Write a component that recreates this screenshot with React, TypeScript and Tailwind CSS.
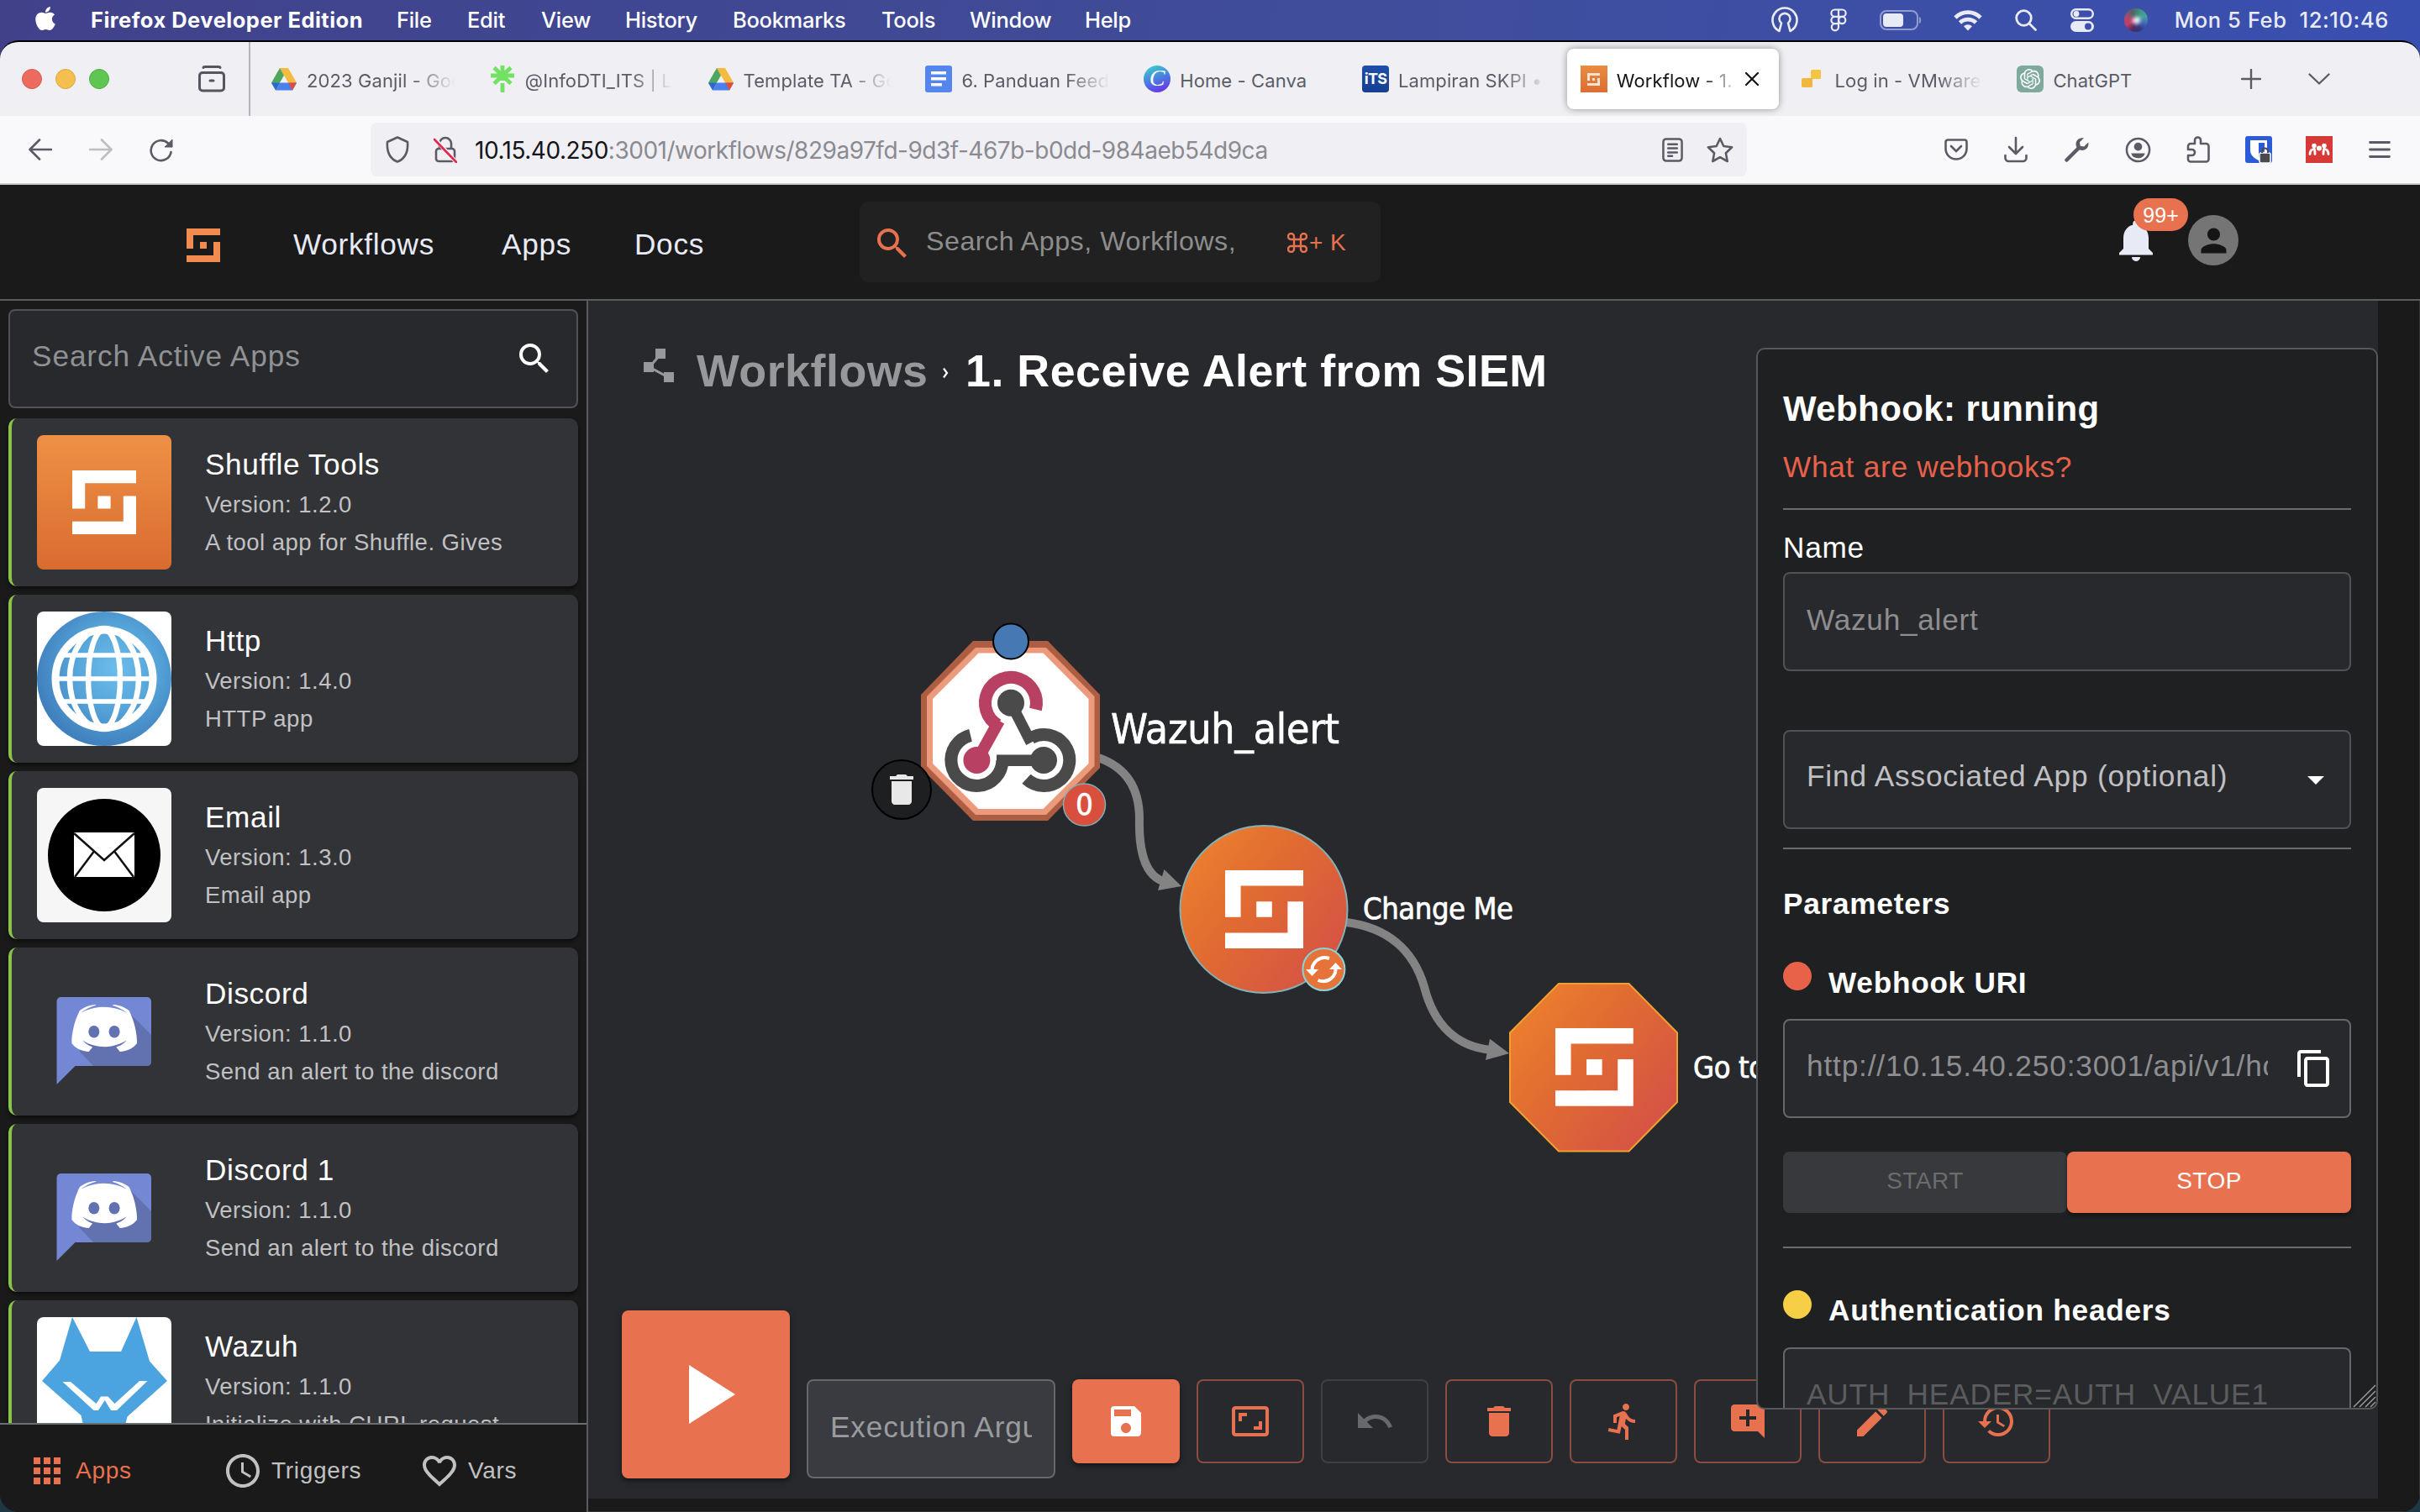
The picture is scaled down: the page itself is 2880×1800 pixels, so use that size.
import React from "react";
import { FaApple } from "react-icons/fa";
import { SiOpenai } from "react-icons/si";
import {
  MdSearch,
  MdNotifications,
  MdPerson,
  MdApps,
  MdAccessTime,
  MdFavoriteBorder,
  MdPlayArrow,
  MdSave,
  MdAspectRatio,
  MdUndo,
  MdDelete,
  MdDirectionsRun,
  MdAddComment,
  MdEdit,
  MdRestore,
  MdContentCopy,
  MdArrowDropDown,
} from "react-icons/md";

const SHUFFLE_PATH = "M0 0H5V1H1V3H0zM2 2H3V3H2zM4 2H5V5H0V4H4z";

function ShuffleMark({ className }: { className?: string }) {
  return (
    <svg viewBox="0 0 5 5" className={className} fill="currentColor">
      <path d={SHUFFLE_PATH} />
    </svg>
  );
}

/* ---------- macOS menu bar ---------- */

const menus = [
  { label: "File", cls: "w-[84px]" },
  { label: "Edit", cls: "w-[88px]" },
  { label: "View", cls: "w-[100px]" },
  { label: "History", cls: "w-[128px]" },
  { label: "Bookmarks", cls: "w-[177px]" },
  { label: "Tools", cls: "w-[105px]" },
  { label: "Window", cls: "w-[137px]" },
  { label: "Help", cls: "w-[60px]" },
];

function MenuBar() {
  return (
    <div className="flex h-12 shrink-0 items-center pl-[40px] pr-[37px] text-[25.5px] leading-[46px] text-white">
      <FaApple className="-mt-[5px] h-[32px] w-[28px]" />
      <div className="ml-[40px] w-[364px] shrink-0 whitespace-nowrap font-bold tracking-[0.48px]">Firefox Developer Edition</div>
      {menus.map((m) => (
        <div key={m.label} className={`shrink-0 whitespace-nowrap font-medium tracking-[-0.3px] ${m.cls}`}>
          {m.label}
        </div>
      ))}
      <div className="ml-auto flex items-center text-[#e8eaf6]">
        <svg viewBox="0 0 34 32" className="h-[32px] w-[34px]" fill="none" stroke="currentColor" strokeWidth="2.6">
          <path d="M10.5 29A14.5 14.5 0 1 1 23.500 29L21 19.500A6.500 6.500 0 1 0 13 19.500Z" strokeLinejoin="round" />
        </svg>
        <svg viewBox="0 0 20 28" className="ml-[37px] h-[28px] w-[20px]" fill="none" stroke="currentColor" strokeWidth="2.2">
          <path d="M10 1.500H5.500a4.100 4.100 0 0 0 0 8.300H10zM10 1.500h4.500a4.100 4.100 0 0 1 0 8.300H10zM10 9.800H5.500a4.100 4.100 0 0 0 0 8.300H10zM10 18.100H5.500A4.100 4.100 0 1 0 10 22.500z" />
          <circle cx="14.200" cy="14" r="4.100" />
        </svg>
        <svg viewBox="0 0 50 24" className="ml-[39px] h-[24px] w-[50px]">
          <rect x="1" y="1" width="44" height="22" rx="7" fill="none" stroke="currentColor" strokeOpacity=".5" strokeWidth="2" />
          <rect x="4" y="4" width="24" height="16" rx="4" fill="currentColor" />
          <path d="M47 8c3 1 3 7 0 8z" fill="currentColor" fillOpacity=".5" />
        </svg>
        <svg viewBox="0 0 34 26" className="ml-[38px] h-[26px] w-[34px]" fill="none" stroke="currentColor" strokeWidth="4.800">
          <path d="M2 10A21 21 0 0 1 32 10" />
          <path d="M7.500 16A13.500 13.500 0 0 1 26.500 16" />
          <path d="M17 25.500l-5-5.300a7.500 7.500 0 0 1 10 0z" fill="currentColor" stroke="none" />
        </svg>
        <svg viewBox="0 0 26 26" className="ml-[39px] h-[26px] w-[26px]" fill="none" stroke="currentColor" strokeWidth="2.800" strokeLinecap="round">
          <circle cx="10.500" cy="10.500" r="8.800" />
          <path d="M17 17l7.500 7.500" />
        </svg>
        <svg viewBox="0 0 28 28" className="ml-[40px] h-[28px] w-[28px]">
          <rect x="1.200" y="1.200" width="25.600" height="10.600" rx="5.300" fill="none" stroke="currentColor" strokeWidth="2.400" />
          <circle cx="7" cy="6.500" r="3.400" fill="currentColor" />
          <rect x="0" y="15" width="28" height="13" rx="6.500" fill="currentColor" />
          <circle cx="21" cy="21.500" r="4" fill="#3b50ae" />
        </svg>
        <div className="ml-[36px] flex h-[28px] w-[28px] items-center justify-center rounded-full bg-[conic-gradient(from_20deg,#3f8f7c,#4aa39b,#3f68b8,#34357e,#4b2a66,#c63d62,#a5496d,#56606b,#3f8f7c)]">
          <div className="h-[9px] w-[9px] rounded-full bg-white/90 blur-[2px]" />
        </div>
        <div className="ml-[31px] w-[256px] whitespace-pre text-right font-medium tracking-[0.62px]">Mon 5 Feb  12:10:46</div>
      </div>
    </div>
  );
}

/* ---------- Browser chrome ---------- */

function DriveIcon() {
  return (
    <svg viewBox="0 0 30 27" className="h-[27px] w-[30px]">
      <path d="M10 0h10l-5 8.700z" fill="#1e8e3e" />
      <path d="M10 0L0 17.500l5 8.500L15 8.700z" fill="#4ca65c" />
      <path d="M20 0H10l10 17.500h10z" fill="#f5bb41" />
      <path d="M10.200 17.500H30l-5 9H5z" fill="#4a80ec" />
      <path d="M20 17.500h10l-5 9z" fill="#dd4b3e" />
      <path d="M10.200 17.500H0l5 9z" fill="#2f66d0" />
    </svg>
  );
}

function LinktreeIcon() {
  return (
    <svg viewBox="0 0 28 32" className="h-[32px] w-[28px]" fill="none" stroke="#73e264" strokeWidth="4.800">
      <path d="M14 0v18M14 21v11M0 12h28M4 2.500l20 19M24 2.500l-20 19" />
    </svg>
  );
}

function DocsIcon() {
  return (
    <svg viewBox="0 0 32 32" className="h-[32px] w-[32px]">
      <rect width="32" height="32" rx="3" fill="#5486ed" />
      <path d="M7 7h18v3.600H7zM7 14h18v3.600H7zM7 21h13v3.600H7z" fill="#fff" />
    </svg>
  );
}

function CanvaIcon() {
  return (
    <div className="flex h-8 w-8 items-center justify-center rounded-full bg-[linear-gradient(160deg,#3ec7cf_10%,#4a7de0_50%,#6d2ae8_95%)]">
      <span className="-mt-[3px] font-['Liberation_Serif',serif] text-[28px] italic leading-none text-white">C</span>
    </div>
  );
}

function ItsIcon() {
  return (
    <div className="flex h-8 w-8 items-center justify-center rounded-[4px] bg-[linear-gradient(#1f4ea8,#173f92)]">
      <span className="text-[18px] font-bold leading-none tracking-[-0.8px] text-white">iTS</span>
    </div>
  );
}

function ShuffleFavicon() {
  return (
    <div className="flex h-8 w-8 items-center justify-center bg-[linear-gradient(#ea8c42,#dc6d33)]">
      <ShuffleMark className="h-[15px] w-[15px] text-[#fbe3d0]" />
    </div>
  );
}

function VmwareIcon() {
  return (
    <svg viewBox="0 0 32 32" className="h-[32px] w-[32px]">
      <rect x="14" y="5" width="12" height="11" rx="1.500" fill="#f4c443" />
      <rect x="3" y="15" width="13" height="11" rx="1.500" fill="#f2b63c" />
    </svg>
  );
}

function ChatGptIcon() {
  return (
    <div className="flex h-8 w-8 items-center justify-center rounded-[6px] bg-[#7fa99c]">
      <SiOpenai className="h-[24px] w-[24px] text-white" />
    </div>
  );
}

const tabs = [
  { title: "2023 Ganjil - Google", icon: <DriveIcon />, fade: true },
  { title: "@InfoDTI_ITS | Linktree", icon: <LinktreeIcon />, fade: true },
  { title: "Template TA - Google", icon: <DriveIcon />, fade: true },
  { title: "6. Panduan Feedback", icon: <DocsIcon />, fade: true },
  { title: "Home - Canva", icon: <CanvaIcon />, fade: false },
  { title: "Lampiran SKPI • ITS", icon: <ItsIcon />, fade: true },
  { title: "Workflow - 1. Receive", icon: <ShuffleFavicon />, fade: true, active: true },
  { title: "Log in - VMware Cloud", icon: <VmwareIcon />, fade: true },
  { title: "ChatGPT", icon: <ChatGptIcon />, fade: false },
];

function TabStrip() {
  return (
    <div className="flex h-[88px] shrink-0 items-stretch bg-[#f0f0f4] text-[#5b5b66]">
      <div className="flex w-[296px] items-center pl-[26px]">
        <div className="h-6 w-6 rounded-full border border-[#d9574c] bg-[#ec6a5e]" />
        <div className="ml-4 h-6 w-6 rounded-full border border-[#dda63b] bg-[#f4bf4f]" />
        <div className="ml-4 h-6 w-6 rounded-full border border-[#4fae3f] bg-[#61c554]" />
        <svg viewBox="0 0 32 32" className="ml-[106px] h-[32px] w-[32px]" fill="none" stroke="#55555f" strokeWidth="3" strokeLinecap="round" strokeLinejoin="round">
          <path d="M6 2.500c0-1 1-1 2-1h16c1 0 2 0 2 1" />
          <rect x="1.500" y="8.500" width="29" height="21.500" rx="3.500" />
          <path d="M14 18h4" />
        </svg>
      </div>
      <div className="mr-[4px] w-[2px] bg-[#b5b5bb]" />
      {tabs.map((t) => (
        <div key={t.title} className="flex w-[259.800px] shrink-0 items-center px-[4px]">
          <div
            className={
              t.active
                ? "flex h-[72px] w-full items-center rounded-[8px] bg-white pl-4 pr-[24px] text-[#15141a] shadow-[0_0_8px_rgba(0,0,0,0.4)]"
                : "flex h-[72px] w-full items-center pl-4 pr-[16px]"
            }
          >
            <div className="flex w-8 shrink-0 justify-center">{t.icon}</div>
            <div
              className={
                t.fade
                  ? "ml-[11px] min-w-0 flex-1 overflow-hidden whitespace-nowrap text-[22px] leading-8 tracking-[0.1px] pt-[3px] [mask-image:linear-gradient(to_right,black_70%,transparent)]"
                  : "ml-[11px] min-w-0 flex-1 overflow-hidden whitespace-nowrap text-[22px] leading-8 tracking-[0.1px] pt-[3px]"
              }
            >
              {t.title}
            </div>
            {t.active && (
              <svg viewBox="0 0 16 16" className="ml-[8px] h-[16px] w-[16px] shrink-0" stroke="#15141a" strokeWidth="2.200" strokeLinecap="round">
                <path d="M1 1l14 14M15 1L1 15" />
              </svg>
            )}
          </div>
        </div>
      ))}
      <svg viewBox="0 0 24 24" className="ml-[27px] h-[24px] w-[24px] self-center" stroke="#5b5b66" strokeWidth="2.400" strokeLinecap="round">
        <path d="M12 1v22M1 12h22" />
      </svg>
      <svg viewBox="0 0 26 14" className="ml-[56px] h-[14px] w-[26px] self-center" stroke="#5b5b66" strokeWidth="2.400" strokeLinecap="round" strokeLinejoin="round" fill="none">
        <path d="M1.500 1.500L13 12.500 24.500 1.500" />
      </svg>
    </div>
  );
}

function AddressBar() {
  return (
    <div className="flex h-[82px] shrink-0 items-center border-b-2 border-[#cccccc] bg-[#f9f9fb] pl-[34px] pr-[35px] text-[#5b5b66]">
      <svg viewBox="0 0 28 26" className="h-[26px] w-[28px]" fill="none" stroke="#5b5b66" strokeWidth="2.600" strokeLinecap="round" strokeLinejoin="round">
        <path d="M27 13H2M13 1.500L1.500 13 13 24.500" />
      </svg>
      <svg viewBox="0 0 28 26" className="ml-[44px] h-[26px] w-[28px]" fill="none" stroke="#bdbdc2" strokeWidth="2.600" strokeLinecap="round" strokeLinejoin="round">
        <path d="M1 13h25M15 1.500L26.500 13 15 24.500" />
      </svg>
      <svg viewBox="0 0 28 28" className="ml-[44px] mt-[2px] h-[28px] w-[28px]" fill="none" stroke="#5b5b66" strokeWidth="2.600" strokeLinecap="round" strokeLinejoin="round">
        <path d="M25.500 16A12 12 0 1 1 22 5.500l4 3.500" />
        <path d="M27 1.500V10h-8.500z" fill="#5b5b66" strokeWidth="1" />
      </svg>
      <div className="ml-[235px] flex h-16 w-[1638px] items-center rounded-[8px] bg-[#f0f0f4] pl-[18px] pr-[16px]">
        <svg viewBox="0 0 28 32" className="h-[32px] w-[28px]" fill="none" stroke="#5b5b66" strokeWidth="2.600" strokeLinejoin="round">
          <path d="M14 1.500l12 5.500c1 13-3 20-12 23.500C5 27 1 20 2 7z" />
        </svg>
        <svg viewBox="0 0 28 32" className="ml-[29px] h-[32px] w-[28px]" fill="none" stroke="#5b5b66" strokeWidth="2.600" strokeLinejoin="round">
          <rect x="3" y="15" width="22" height="15" rx="3" />
          <path d="M7 15V9a7 7 0 0 1 14 0v6" />
          <path d="M1 3l26 28" stroke="#f0f0f4" strokeWidth="5" />
          <path d="M1 4l26 27" stroke="#e22850" strokeLinecap="round" />
        </svg>
        <div className="ml-[21px] whitespace-nowrap pt-[2px] text-[28px] leading-8 tracking-[-0.48px] text-[#8a8a90]">
          <span className="text-[#15141a]">10.15.40.250</span>:3001/workflows/829a97fd-9d3f-467b-b0dd-984aeb54d9ca
        </div>
        <svg viewBox="0 0 26 30" className="ml-auto h-[29px] w-[25px]" fill="none" stroke="#5b5b66" strokeWidth="2.600" strokeLinecap="round">
          <rect x="1.500" y="1.500" width="23" height="27" rx="3.500" />
          <path d="M7.500 8h11M7.500 13h11M7.500 18h11M7.500 22.500h5" />
        </svg>
        <svg viewBox="0 0 32 31" className="ml-[28px] h-[31px] w-[32px]" fill="none" stroke="#5b5b66" strokeWidth="2.600" strokeLinejoin="round">
          <path d="M16 2l4.300 9 9.800 1.300-7.200 6.900 1.800 9.800L16 24.200 7.300 29l1.800-9.800L1.900 12.300 11.700 11z" />
        </svg>
      </div>
      <div className="ml-auto flex items-center">
        <svg viewBox="0 0 28 26" className="h-[26px] w-[28px]" fill="none" stroke="#5b5b66" strokeWidth="2.600" strokeLinecap="round" strokeLinejoin="round">
          <path d="M4 1.500h20a2.500 2.500 0 0 1 2.500 2.500v8a12.500 12.500 0 0 1-25 0V4A2.500 2.500 0 0 1 4 1.500z" />
          <path d="M8 9l6 6 6-6" />
        </svg>
        <svg viewBox="0 0 28 32" className="ml-[43px] h-[32px] w-[28px]" fill="none" stroke="#5b5b66" strokeWidth="2.600" strokeLinecap="round" strokeLinejoin="round">
          <path d="M14 2v18M6 13l8 8 8-8M1.500 23v3a4 4 0 0 0 4 4h17a4 4 0 0 0 4-4v-3" />
        </svg>
        <svg viewBox="0 0 30 30" className="ml-[44px] h-[30px] w-[30px]">
          <path d="M2.500 27.500L16 14" stroke="#5b5b66" strokeWidth="4.500" strokeLinecap="round" />
          <path d="M28.200 6.500l-5 5-4.500-.700-.700-4.500 5-5C18.500.500 13.500 3 13.500 8.500c0 4 3 7.500 7.500 7.500 4.700 0 8.500-4.500 7.200-9.500z" fill="#5b5b66" />
        </svg>
        <svg viewBox="0 0 32 32" className="ml-[42px] h-[31px] w-[31px]" fill="none" stroke="#5b5b66" strokeWidth="2.600">
          <circle cx="16" cy="16" r="14" />
          <circle cx="16" cy="12" r="5" fill="#5b5b66" stroke="none" />
          <path d="M7.500 20h17c-1 4-4.500 6-8.500 6s-7.500-2-8.500-6z" fill="#5b5b66" stroke="none" />
        </svg>
        <svg viewBox="0 0 28 32" className="ml-[42px] h-[32px] w-[28px]" fill="none" stroke="#5b5b66" strokeWidth="2.600" strokeLinejoin="round">
          <path d="M10 9V5a3.500 3.500 0 0 1 7 0v4h6.500a3 3 0 0 1 3 3v15.500a3 3 0 0 1-3 3H5a3 3 0 0 1-3-3V23h4.500a3.500 3.500 0 0 0 0-7H2v-4a3 3 0 0 1 3-3z" />
        </svg>
        <svg viewBox="0 0 32 32" className="ml-[42px] h-[32px] w-[32px]">
          <rect width="32" height="32" rx="3" fill="#2b5bd7" />
          <path d="M6 5h20v12c0 6-5 9.500-10 12C11 26.500 6 23 6 17z" fill="#fff" />
          <path d="M16 8h7v9c0 3.500-3 6-7 8.500z" fill="#2b5bd7" />
          <rect x="17" y="20" width="13" height="12" rx="2" fill="#4a4a4f" stroke="#fff" strokeWidth="1.500" />
          <path d="M20 20v-2a3.500 3.500 0 0 1 7 0v2" stroke="#4a4a4f" strokeWidth="2" fill="none" />
        </svg>
        <svg viewBox="0 0 32 32" className="ml-[40px] h-[32px] w-[32px]">
          <rect width="32" height="32" fill="#d63a37" />
          <g fill="none" stroke="#fff" strokeWidth="2.800" strokeLinecap="round">
            <path d="M5 21.500c0-2.500.500-4.500 3-5.500M27 21.500c0-2.500-.500-4.500-3-5.500M11 21.500c0-2.500.200-4.500-1-7M21 21.500c0-2.500-.200-4.500 1-7" />
          </g>
          <circle cx="10" cy="11.500" r="2.800" fill="#fff" />
          <circle cx="22" cy="11.500" r="2.800" fill="#fff" />
          <circle cx="16" cy="14.500" r="3" fill="#fff" />
        </svg>
        <svg viewBox="0 0 26 22" className="ml-[43px] h-[22px] w-[26px]" stroke="#5b5b66" strokeWidth="2.800" strokeLinecap="round">
          <path d="M1.500 2.500h23M1.500 11h23M1.500 19.500h23" />
        </svg>
      </div>
    </div>
  );
}

/* ---------- Shuffle header ---------- */

function AppHeader() {
  return (
    <div className="flex h-[138px] shrink-0 items-start border-b-2 border-[#595b5f] bg-[#1a1a1a] text-[35.2px] leading-10 tracking-[0.7px] text-[#e8eaf6]">
      <ShuffleMark className="ml-[222px] mt-[52px] h-10 w-10 text-[#f28b50]" />
      <div className="ml-[87px] mt-[51px] w-[248px]">Workflows</div>
      <div className="mt-[51px] w-[158px]">Apps</div>
      <div className="mt-[51px] w-[268px]">Docs</div>
      <div className="mt-5 flex h-24 w-[620px] items-center rounded-[10px] bg-[#212121] pl-[15px]">
        <MdSearch className="mt-[4px] h-[48px] w-[48px] text-[#e8714f]" />
        <div className="ml-[16px] w-[430px] pb-[3px] text-[32.2px] tracking-[0.52px] text-[#8d8d8d]">Search Apps, Workflows,</div>
        <div className="flex items-center pt-[1px] text-[28px] tracking-[0.4px] text-[#e8714f]">
          <svg viewBox="0 0 24 24" className="h-[24px] w-[24px]" fill="none" stroke="currentColor" strokeWidth="2.400">
            <path d="M8 8H5a3.500 3.500 0 1 1 3-3.500V19.500A3.500 3.500 0 1 1 4.500 16h15a3.500 3.500 0 1 1-3.500 3.500v-15A3.500 3.500 0 1 1 19.500 8z" />
          </svg>
          <span className="ml-[2px]">+ K</span>
        </div>
      </div>
      <div className="relative ml-[869px] mt-9 h-[60px] w-[60px]">
        <MdNotifications className="h-[60px] w-[60px]" />
        <div className="absolute left-[27px] top-[-20px] flex h-[39px] w-[65px] items-center justify-center rounded-full bg-[#e8714f] text-[25px] tracking-[0.1px] text-white">
          99+
        </div>
      </div>
      <div className="ml-[32px] mt-9 flex h-[60px] w-[60px] items-center justify-center rounded-full bg-[#757575] text-[#151515]">
        <MdPerson className="h-[45px] w-[45px]" />
      </div>
    </div>
  );
}

/* ---------- Sidebar ---------- */

function ShuffleToolsArt() {
  return (
    <div className="flex h-40 w-40 items-center justify-center rounded-[8px] bg-[linear-gradient(#ee9145,#d96b30)]">
      <ShuffleMark className="h-[76px] w-[76px] text-white" />
    </div>
  );
}

function HttpArt() {
  return (
    <svg viewBox="0 0 160 160" className="h-40 w-40 rounded-[8px] bg-white">
      <defs>
        <radialGradient id="globe" cx="0.58" cy="0.42" r="0.6">
          <stop offset="0" stopColor="#6cbdeb" />
          <stop offset="0.5" stopColor="#56a5da" />
          <stop offset="1" stopColor="#3f7fbd" />
        </radialGradient>
      </defs>
      <circle cx="80" cy="80" r="80" fill="url(#globe)" />
      <g fill="none" stroke="#fff" strokeWidth="6.500">
        <circle cx="80" cy="80" r="58" strokeWidth="9" />
        <ellipse cx="80" cy="80" rx="19" ry="58" />
        <ellipse cx="80" cy="80" rx="41" ry="60" />
        <path d="M22 80H138M31 52H129M31 107H129" strokeWidth="5.500" />
      </g>
    </svg>
  );
}

function EmailArt() {
  return (
    <svg viewBox="0 0 160 160" className="h-40 w-40 rounded-[8px] bg-[#f6f6f6]">
      <circle cx="80" cy="80" r="67" fill="#000" />
      <rect x="44" y="53" width="72" height="53" fill="#fff" />
      <path d="M44 54L80 86L116 54M45 106L67.500 76M115 106L92.500 76" fill="none" stroke="#111" strokeWidth="2.500" />
    </svg>
  );
}

function DiscordArt() {
  return (
    <svg viewBox="0 0 160 160" className="h-40 w-40">
      <path d="M29 39H131a5 5 0 0 1 5 5V116a5 5 0 0 1-5 5H45.500L23.500 143V44a5 5 0 0 1 5.500-5z" fill="#7487d4" />
      <path d="M112 60L136 84V116a5 5 0 0 1-5 5H67L50 103z" fill="#6271b0" />
      <g transform="translate(21.600 17) scale(.26)">
        <path
          fill="#fff"
          d="M375.040 295.424c0-82.432-36.864-149.248-36.864-149.248-36.864-27.648-71.936-26.880-71.936-26.880l-3.584 4.096c43.520 13.312 63.744 32.512 63.744 32.512-60.811-33.329-132.244-33.335-191.232-7.424-9.472 4.352-15.104 7.424-15.104 7.424s21.248-20.224 67.328-33.536l-2.560-3.072s-35.072-.768-71.936 26.880c0 0-36.864 66.816-36.864 149.248 0 0 21.504 37.120 78.080 38.912 0 0 9.472-11.520 17.152-21.248-32.512-9.728-44.800-30.208-44.800-30.208 3.766 2.636 9.976 6.053 10.496 6.400 43.210 24.198 104.588 32.126 159.744 8.960 8.960-3.328 18.944-8.192 29.440-15.104 0 0-12.800 20.992-46.336 30.464 7.680 9.728 16.896 20.736 16.896 20.736 56.576-1.792 78.336-38.912 78.336-38.912z"
        />
        <ellipse cx="271.100" cy="243.200" rx="25" ry="28" fill="#6271b0" />
        <ellipse cx="177.700" cy="243.200" rx="25" ry="28" fill="#6271b0" />
      </g>
    </svg>
  );
}

function WazuhArt() {
  return (
    <svg viewBox="0 0 160 160" className="h-40 w-40 rounded-[8px] bg-white">
      <path d="M42 0L63 41H100L118.500 0L134 52.500L155 76L107.500 118.500L100 150H60L52.500 117L6 76L27 51.500z" fill="#4ba4df" />
      <path d="M30.500 77H40L70.500 103L76 94.600H84.500L92.500 103L122 76H131.500L95 111H88L80.800 99L73 111H67.500z" fill="#fff" />
    </svg>
  );
}

const apps = [
  { name: "Shuffle Tools", version: "1.2.0", desc: "A tool app for Shuffle. Gives", art: <ShuffleToolsArt /> },
  { name: "Http", version: "1.4.0", desc: "HTTP app", art: <HttpArt /> },
  { name: "Email", version: "1.3.0", desc: "Email app", art: <EmailArt /> },
  { name: "Discord", version: "1.1.0", desc: "Send an alert to the discord", art: <DiscordArt /> },
  { name: "Discord 1", version: "1.1.0", desc: "Send an alert to the discord", art: <DiscordArt /> },
  { name: "Wazuh", version: "1.1.0", desc: "Initialize with CURL request", art: <WazuhArt /> },
];

function Sidebar() {
  return (
    <div className="flex w-[700px] shrink-0 flex-col border-r-2 border-[#595b5f] bg-[#1a1a1a]">
      <div className="flex min-h-0 flex-1 flex-col overflow-hidden px-[10px] pt-[10px]">
        <div className="flex h-[118px] shrink-0 items-center justify-between rounded-[8px] border-2 border-[#505255] bg-[#27292d] pl-[26px] pr-[26px]">
          <span className="pb-[6px] text-[35.2px] leading-10 tracking-[0.92px] text-[#909193]">Search Active Apps</span>
          <MdSearch className="h-[48px] w-[48px] text-white" />
        </div>
        <div className="mt-[12px] flex flex-col gap-[10px]">
          {apps.map((a) => (
            <div
              key={a.name}
              className="flex h-[200px] shrink-0 rounded-[10px] border-l-4 border-[#8bc34a] bg-[#323337] pl-[30px] pt-5 shadow-[0_3px_4px_rgba(0,0,0,0.5)]"
            >
              {a.art}
              <div className="ml-[40px] mt-[15px] flex-1 whitespace-nowrap text-[27.5px] leading-[45px] tracking-[0.48px] text-[#c1c1c3]">
                <div className="mb-[5px] text-[35.2px] leading-10 tracking-[0.6px] text-white">{a.name}</div>
                <div>Version: {a.version}</div>
                <div>{a.desc}</div>
              </div>
            </div>
          ))}
        </div>
      </div>
      <div className="flex h-[106px] shrink-0 items-center border-t-2 border-[#6b6e70] bg-[#1a1a1a] pl-[32px] pt-[5px] text-[28px] leading-10 tracking-[0.7px] text-[#c1c1c3]">
        <div className="flex w-[233px] items-center gap-[10px] text-[#e8714f]">
          <MdApps className="h-[48px] w-[48px]" />
          Apps
        </div>
        <div className="flex w-[234px] items-center gap-[10px]">
          <MdAccessTime className="h-[48px] w-[48px]" />
          Triggers
        </div>
        <div className="flex items-center gap-[10px]">
          <MdFavoriteBorder className="h-[48px] w-[48px]" />
          Vars
        </div>
      </div>
    </div>
  );
}

/* ---------- Workflow canvas ---------- */

function NodeDefs() {
  return (
    <defs>
      <linearGradient id="nodeFill" x1="0" y1="0.1" x2="1" y2="0.9">
        <stop offset="0.050" stopColor="#ec7f2e" />
        <stop offset="0.400" stopColor="#e16c31" />
        <stop offset="1" stopColor="#d34f48" />
      </linearGradient>
    </defs>
  );
}

/* The graph is drawn in window coordinates; its view box starts at the canvas corner (700, 358). */
function Graph() {
  return (
    <svg viewBox="700 358 2130 1426" className="absolute left-0 top-0 h-[1426px] w-[2130px]">
      <NodeDefs />
      <g fill="none" stroke="#838383" strokeWidth="10">
        <path d="M1307 902C1342 914 1356 940 1356 975C1355 1015 1364 1042 1384 1049" />
        <path d="M1602 1098C1650 1104 1682 1130 1695 1175C1707 1222 1735 1246 1774 1250" />
      </g>
      <g fill="#838383">
        <path d="M1385.500 1035L1406 1055L1378 1060z" />
        <path d="M1773 1236.700L1796 1254L1768 1262z" />
      </g>

      <path d="M1158 763H1247L1309 827V914L1247 977H1158L1096 914V827z" fill="#ad5d42" />
      <path d="M1161 771H1245L1302.500 829V912L1245 970H1161L1103 912V829z" fill="#ec9a7c" />
      <path d="M1164.500 777.500H1241.500L1295.500 832V909L1241.500 963H1164.500L1110 909V832z" fill="#fff" />
      <g fill="none" strokeWidth="15">
        <path d="M1155 875.400A30.500 30.500 0 1 0 1192.900 905" stroke="#4a4a4a" />
        <path d="M1186 905.300H1242" stroke="#4a4a4a" strokeWidth="13.500" />
        <path d="M1227 878.600A30.500 30.500 0 1 1 1221.500 927.300" stroke="#4a4a4a" />
        <path d="M1203 837L1227 884" stroke="#4a4a4a" strokeWidth="13" />
        <path d="M1232.500 844.500A30.500 30.500 0 1 0 1187.500 863.200" stroke="#b84163" />
        <path d="M1189 858L1163 905" stroke="#b84163" strokeWidth="14" />
      </g>
      <circle cx="1203" cy="836.700" r="16" fill="#4a4a4a" />
      <circle cx="1242" cy="905" r="16" fill="#4a4a4a" />
      <circle cx="1162.400" cy="905" r="16" fill="#b84163" />

      <circle cx="1203" cy="763.500" r="21" fill="#4679b3" stroke="#000" strokeWidth="2" />
      <circle cx="1073" cy="940" r="35" fill="#1d1f21" stroke="#000" strokeWidth="2" />
      <g transform="translate(1049 916) scale(2)" fill="#e8e8e8">
        <path d="M6 19c0 1.100.900 2 2 2h8c1.100 0 2-.900 2-2V7H6v12zM19 4h-3.500l-1-1h-5l-1 1H5v2h14V4z" />
      </g>
      <circle cx="1290.500" cy="958" r="25" fill="#d84f3e" stroke="#7fb0b5" strokeWidth="1.500" />

      <circle cx="1504" cy="1082.500" r="99.500" fill="url(#nodeFill)" stroke="#86b0b3" strokeWidth="2" />
      <g transform="translate(1458 1036) scale(18.600)" fill="#fff">
        <path d={SHUFFLE_PATH} />
      </g>
      <circle cx="1575.400" cy="1154" r="25" fill="#e6733a" stroke="#88d5dc" strokeWidth="2" />
      <g fill="none" stroke="#fff" strokeWidth="4">
        <path d="M1582 1141A15 14 0 0 0 1562 1157" />
        <path d="M1568.500 1167A15 14 0 0 0 1589 1151" />
      </g>
      <path d="M1554 1154h15l-7.500 8zM1582 1154h15l-7.500-8z" fill="#fff" />

      <path d="M1855 1171H1938.500L1996 1229.500V1312L1938.500 1370.500H1855L1797 1312V1229.500z" fill="url(#nodeFill)" stroke="#f0a030" strokeWidth="2" />
      <g transform="translate(1851 1224) scale(18.550)" fill="#fff">
        <path d={SHUFFLE_PATH} />
      </g>
    </svg>
  );
}

const LABEL =
  "absolute whitespace-nowrap text-white font-['DejaVu_Sans_Condensed','DejaVu_Sans',sans-serif] [font-stretch:condensed] [-webkit-text-stroke:0.7px_white]";

function NodeLabels() {
  return (
    <>
      <span className={`${LABEL} left-[622px] top-[480px] text-[49.5px] leading-[60px] tracking-[-0.1px]`}>Wazuh_alert</span>
      <span className={`${LABEL} left-[578px] top-[580px] w-[25px] text-center text-[36px] leading-[40px]`}>0</span>
      <span className={`${LABEL} left-[922px] top-[704px] text-[36px] leading-[40px] tracking-[-0.4px]`}>Change Me</span>
      <span className={`${LABEL} left-[1315px] top-[893px] text-[36px] leading-[40px] tracking-[-0.4px]`}>Go to</span>
    </>
  );
}

const tools = [
  { id: "size", Icon: MdAspectRatio },
  { id: "undo", Icon: MdUndo, disabled: true },
  { id: "delete", Icon: MdDelete },
  { id: "run", Icon: MdDirectionsRun },
  { id: "comment", Icon: MdAddComment },
  { id: "edit", Icon: MdEdit },
  { id: "history", Icon: MdRestore },
];

function Toolbar() {
  return (
    <div className="absolute bottom-[24px] left-[40px] flex h-[200px] items-end gap-5">
      <div className="flex h-[200px] w-[200px] items-center justify-center rounded-[8px] bg-[#e8714f] shadow-[0_3px_6px_rgba(0,0,0,0.5)]">
        <MdPlayArrow className="h-[120px] w-[120px] text-white" />
      </div>
      <div className="flex h-[118px] w-[296px] items-center rounded-[8px] border-2 border-[#65676b] bg-[#393b40] px-[26px]">
        <span className="overflow-hidden whitespace-nowrap pb-[4px] text-[35.2px] leading-10 tracking-[0.9px] text-[#999b9e]">Execution Argument</span>
      </div>
      <div className="flex gap-5 self-stretch pt-[82px]">
        <div className="flex h-[100px] w-[128px] items-center justify-center rounded-[8px] bg-[#e8714f] text-white shadow-[0_3px_6px_rgba(0,0,0,0.5)]">
          <MdSave className="h-[48px] w-[48px]" />
        </div>
        {tools.map(({ id, Icon, disabled }) => (
          <div
            key={id}
            className={
              disabled
                ? "flex h-[100px] w-[128px] items-center justify-center rounded-[8px] border-2 border-[#3e4044] text-[#68696c]"
                : "flex h-[100px] w-[128px] items-center justify-center rounded-[8px] border-2 border-[#8a4d3f] text-[#e8714f]"
            }
          >
            <Icon className="h-[48px] w-[48px]" />
          </div>
        ))}
      </div>
    </div>
  );
}

function DetailsPanel() {
  return (
    <div className="absolute left-[1390px] top-[56px] h-[1264px] w-[740px] overflow-hidden rounded-[10px] border-2 border-[#55575a] bg-[#1f2022] px-[30px] text-[35.2px] leading-10 tracking-[0.75px] text-white">
      <div className="mt-[49px] text-[42px] font-bold leading-[44px] tracking-[0.4px]">Webhook: running</div>
      <div className="mt-[27px] text-[#e8614a]">What are webhooks?</div>
      <div className="mt-[29px] h-[2px] bg-[#6b6c6e]" />
      <div className="mt-[25px]">Name</div>
      <div className="mt-[9px] flex h-[118px] items-center rounded-[8px] border-2 border-[#505255] bg-[#27292d] px-[26px] pb-[5px] text-[#8e8e90]">Wazuh_alert</div>
      <div className="mt-[70px] flex h-[118px] items-center justify-between rounded-[8px] border-2 border-[#505255] bg-[#27292d] pl-[26px] pr-[16px] text-[#c0c0c2]">
        <span className="pb-[9px] tracking-[0.87px]">Find Associated App (optional)</span>
        <MdArrowDropDown className="h-[48px] w-[48px] text-white" />
      </div>
      <div className="mt-[22px] h-[2px] bg-[#6b6c6e]" />
      <div className="mt-[45px] font-bold">Parameters</div>
      <div className="mt-[49px] flex">
        <div className="h-[34px] w-[34px] rounded-full bg-[#e8624a]" />
        <div className="ml-[20px] mt-[5px] font-bold">Webhook URI</div>
      </div>
      <div className="mt-[23px] flex h-[118px] items-center justify-between rounded-[8px] border-2 border-[#66686b] bg-[#27292d] pl-[26px] pr-[18px] text-[#8e8e90]">
        <span className="w-[549px] overflow-hidden whitespace-nowrap pb-[7px] tracking-[0.85px]">http://10.15.40.250:3001/api/v1/hooks</span>
        <MdContentCopy className="h-[48px] w-[48px] text-white" />
      </div>
      <div className="mt-[40px] flex h-[73px] text-[28px] leading-[70px] tracking-[0.5px]">
        <div className="flex-1 rounded-[8px] bg-[#38393c] text-center text-[#6b6c6e]">START</div>
        <div className="flex-1 rounded-[8px] bg-[#e8714f] text-center shadow-[0_3px_5px_rgba(0,0,0,0.4)]">STOP</div>
      </div>
      <div className="mt-[40px] h-[2px] bg-[#6b6c6e]" />
      <div className="mt-[50px] flex">
        <div className="h-[34px] w-[34px] rounded-full bg-[#f7cf46]" />
        <div className="ml-[20px] mt-[4px] whitespace-nowrap font-bold">Authentication headers</div>
      </div>
      <div className="mt-[24px] h-[140px] rounded-[8px] border-2 border-[#66686b] bg-[#27292d] px-[26px] pt-[34px] tracking-[0.85px] text-[#5b5c5e]">AUTH_HEADER=AUTH_VALUE1</div>
      <svg viewBox="0 0 28 28" className="absolute bottom-0 right-0 h-[28px] w-[28px]" stroke="#9a9a9a" strokeWidth="1.500">
        <path d="M1 27L27 1M8 27L27 8M15 27L27 15M21 27L27 21" />
      </svg>
    </div>
  );
}

function Canvas() {
  return (
    <div className="relative mb-4 w-[2130px] shrink-0 overflow-hidden bg-[#27292d]">
      <div className="flex items-start pl-[66px] pt-[57px] text-[53.800px] font-bold leading-[60px] tracking-[0.5px]">
        <svg viewBox="0 0 36 40" className="h-[40px] w-[36px] text-[#97989a]" fill="currentColor">
          <path d="M14 0h12v12H14zM0 16h12v12H0zM24 28h12v12H24z" />
          <path d="M19 8L7 22l22 12" fill="none" stroke="currentColor" strokeWidth="3" />
        </svg>
        <span className="ml-[27px] mt-[-4px] w-[272px] whitespace-nowrap text-[#97989a]">Workflows</span>
        <svg viewBox="0 0 6 12" className="ml-[21px] mt-[23px] h-[12px] w-[7px]" fill="none" stroke="#fff" strokeWidth="2.200">
          <path d="M.500 .500L4.500 6L.500 11.500" />
        </svg>
        <span className="ml-[20px] mt-[-4px] text-white">1. Receive Alert from SIEM</span>
      </div>
      <Graph />
      <NodeLabels />
      <Toolbar />
      <DetailsPanel />
    </div>
  );
}

export default function App() {
  return (
    <div className="h-[1800px] w-[2880px] overflow-hidden bg-[linear-gradient(100deg,#41418a_0%,#3f4d9a_50%,#3850b6_100%)] font-['Inter',sans-serif]">
      <div className="flex h-full flex-col bg-[linear-gradient(transparent_1700px,#1d3944_1700px)]">
        <MenuBar />
        <div className="flex h-[1752px] flex-col overflow-hidden rounded-[22px] border-t-2 border-black bg-[#1a1a1a]">
          <TabStrip />
          <AddressBar />
          <div className="flex min-h-0 flex-1 flex-col border-x border-b border-[#333333] font-['Liberation_Sans',Arial,sans-serif]">
            <div className="-mx-px -mb-px flex min-h-0 flex-1 flex-col">
              <AppHeader />
              <div className="flex min-h-0 flex-1">
                <Sidebar />
                <Canvas />
              </div>
            </div>
          </div>
        </div>
      </div>
    </div>
  );
}
